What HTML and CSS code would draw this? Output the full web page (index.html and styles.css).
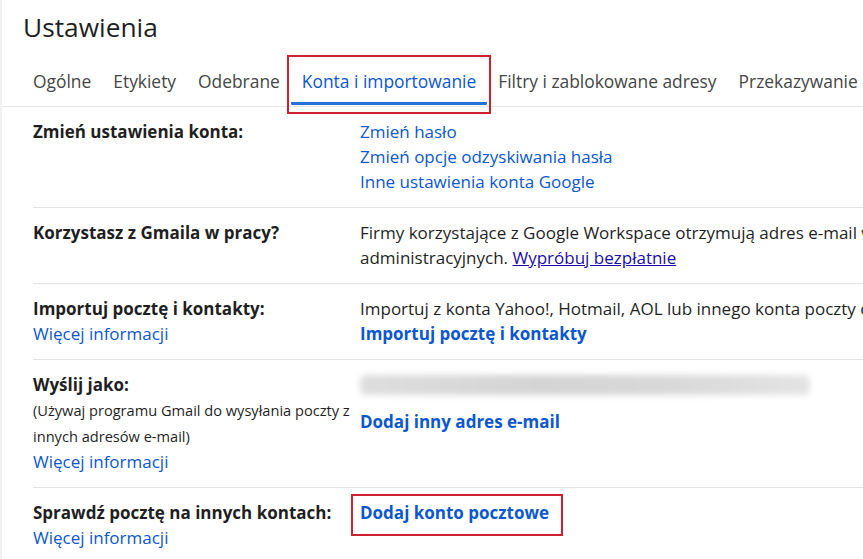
FILE: index.html
```html
<!DOCTYPE html>
<html lang="pl">
<head>
<meta charset="utf-8">
<title>Ustawienia</title>
<link rel="stylesheet" href="styles.css">
</head>
<body>
<div class="page">
  <h1 class="title">Ustawienia</h1>
  <nav class="tabs">
    <span class="tab">Ogólne</span>
    <span class="tab">Etykiety</span>
    <span class="tab">Odebrane</span>
    <span class="tab active">Konta i importowanie</span>
    <span class="tab">Filtry i zablokowane adresy</span>
    <span class="tab">Przekazywanie</span>
  </nav>
  <div class="table">
    <div class="row r1">
      <div class="label"><b>Zmień ustawienia konta:</b></div>
      <div class="value">
        <a class="link">Zmień hasło</a><br>
        <a class="link">Zmień opcje odzyskiwania hasła</a><br>
        <a class="link">Inne ustawienia konta Google</a>
      </div>
    </div>
    <div class="row r2">
      <div class="label"><b>Korzystasz z Gmaila w pracy?</b></div>
      <div class="value">Firmy korzystające z Google Workspace otrzymują adres e-mail w domenie firmy oraz dostęp do narzędzi<br>administracyjnych. <a class="ulink">Wypróbuj bezpłatnie</a></div>
    </div>
    <div class="row r3">
      <div class="label"><b>Importuj pocztę i kontakty:</b><br><a class="link">Więcej informacji</a></div>
      <div class="value">Importuj z konta Yahoo!, Hotmail, AOL lub innego konta poczty ogólnodostępnej.<br><a class="blink">Importuj pocztę i kontakty</a></div>
    </div>
    <div class="row r4">
      <div class="label"><b>Wyślij jako:</b><br><span class="small">(Używaj programu Gmail do wysyłania poczty z innych adresów e-mail)</span><a class="link">Więcej informacji</a></div>
      <div class="value">
        <div class="blur"></div>
        <a class="blink">Dodaj inny adres e-mail</a>
      </div>
    </div>
    <div class="row r5">
      <div class="label"><b>Sprawdź pocztę na innych kontach:</b><br><a class="link">Więcej informacji</a></div>
      <div class="value"><a class="blink boxed">Dodaj konto pocztowe</a></div>
    </div>
  </div>
</div>
</body>
</html>
```
FILE: styles.css
```css
html, body {
  margin: 0;
  padding: 0;
  background: #fff;
  overflow: hidden;
}
body {
  width: 863px;
  height: 559px;
  font-family: "Open Sans", "Noto Sans", sans-serif;
  color: #1f1f1f;
}
.page {
  border-left: 2px solid #f1f1f1;
  height: 559px;
  box-sizing: border-box;
  overflow: hidden;
}
.title {
  margin: 0;
  padding: 10px 0 0 21px;
  height: 45px;
  box-sizing: border-box;
  font-weight: 400;
  font-size: 26.3px;
  line-height: 34px;
  color: #1f1f1f;
  white-space: nowrap;
}
.tabs {
  display: flex;
  white-space: nowrap;
  padding-left: 20px;
  border-bottom: 1px solid #e6e6e6;
  height: 62px;
  box-sizing: border-box;
}
.tab {
  display: block;
  padding: 24px 11px 0;
  font-size: 17.4px;
  line-height: 24px;
  color: #444746;
  height: 60px;
  box-sizing: border-box;
}
.tab.active {
  color: #0b57d0;
  position: relative;
  border-bottom: 3px solid #2a6fd6;
  border-radius: 0 0 1px 1px;
}
.tab.active::after {
  content: "";
  position: absolute;
  left: -4px;
  right: -4px;
  top: 10px;
  bottom: -12px;
  border: 2px solid #d0202e;
}
.table {
  padding-left: 31px;
}
.row {
  display: flex;
  border-top: 1px solid #e3e3e3;
  padding-top: 12px;
  font-size: 17px;
  line-height: 25px;
  white-space: nowrap;
  box-sizing: border-box;
}
.row.r1 { border-top: none; padding-top: 12px; height: 100px; }
.row.r2 { height: 76px; }
.row.r3 { height: 76px; }
.row.r4 { height: 128px; }
.row.r5 { height: 80px; }
.label {
  width: 327px;
  flex: none;
}
.label b {
  font-weight: 700;
}
.small {
  display: block;
  white-space: normal;
  font-size: 14.6px;
  line-height: 26px;
  width: 325px;
}
.value {
  flex: none;
}
.link {
  color: #0b57d0;
  text-decoration: none;
}
.ulink {
  color: #1a0dab;
  text-decoration: underline;
}
.blink {
  color: #0b57d0;
  font-weight: 700;
  text-decoration: none;
}
.r4 .blink {
  display: block;
  margin-top: 14px;
}
.blur {
  width: 450px;
  height: 20px;
  margin-top: 3px;
  background: linear-gradient(90deg, #dedede, #d4d4d4 40%, #d9d9d9 70%, #e4e4e4);
  filter: blur(3px);
  border-radius: 6px;
}
.boxed {
  position: relative;
  display: inline-block;
}
.boxed::after {
  content: "";
  position: absolute;
  left: -9px;
  right: -14px;
  top: -6px;
  bottom: -11px;
  border: 2px solid #d0202e;
}
```
